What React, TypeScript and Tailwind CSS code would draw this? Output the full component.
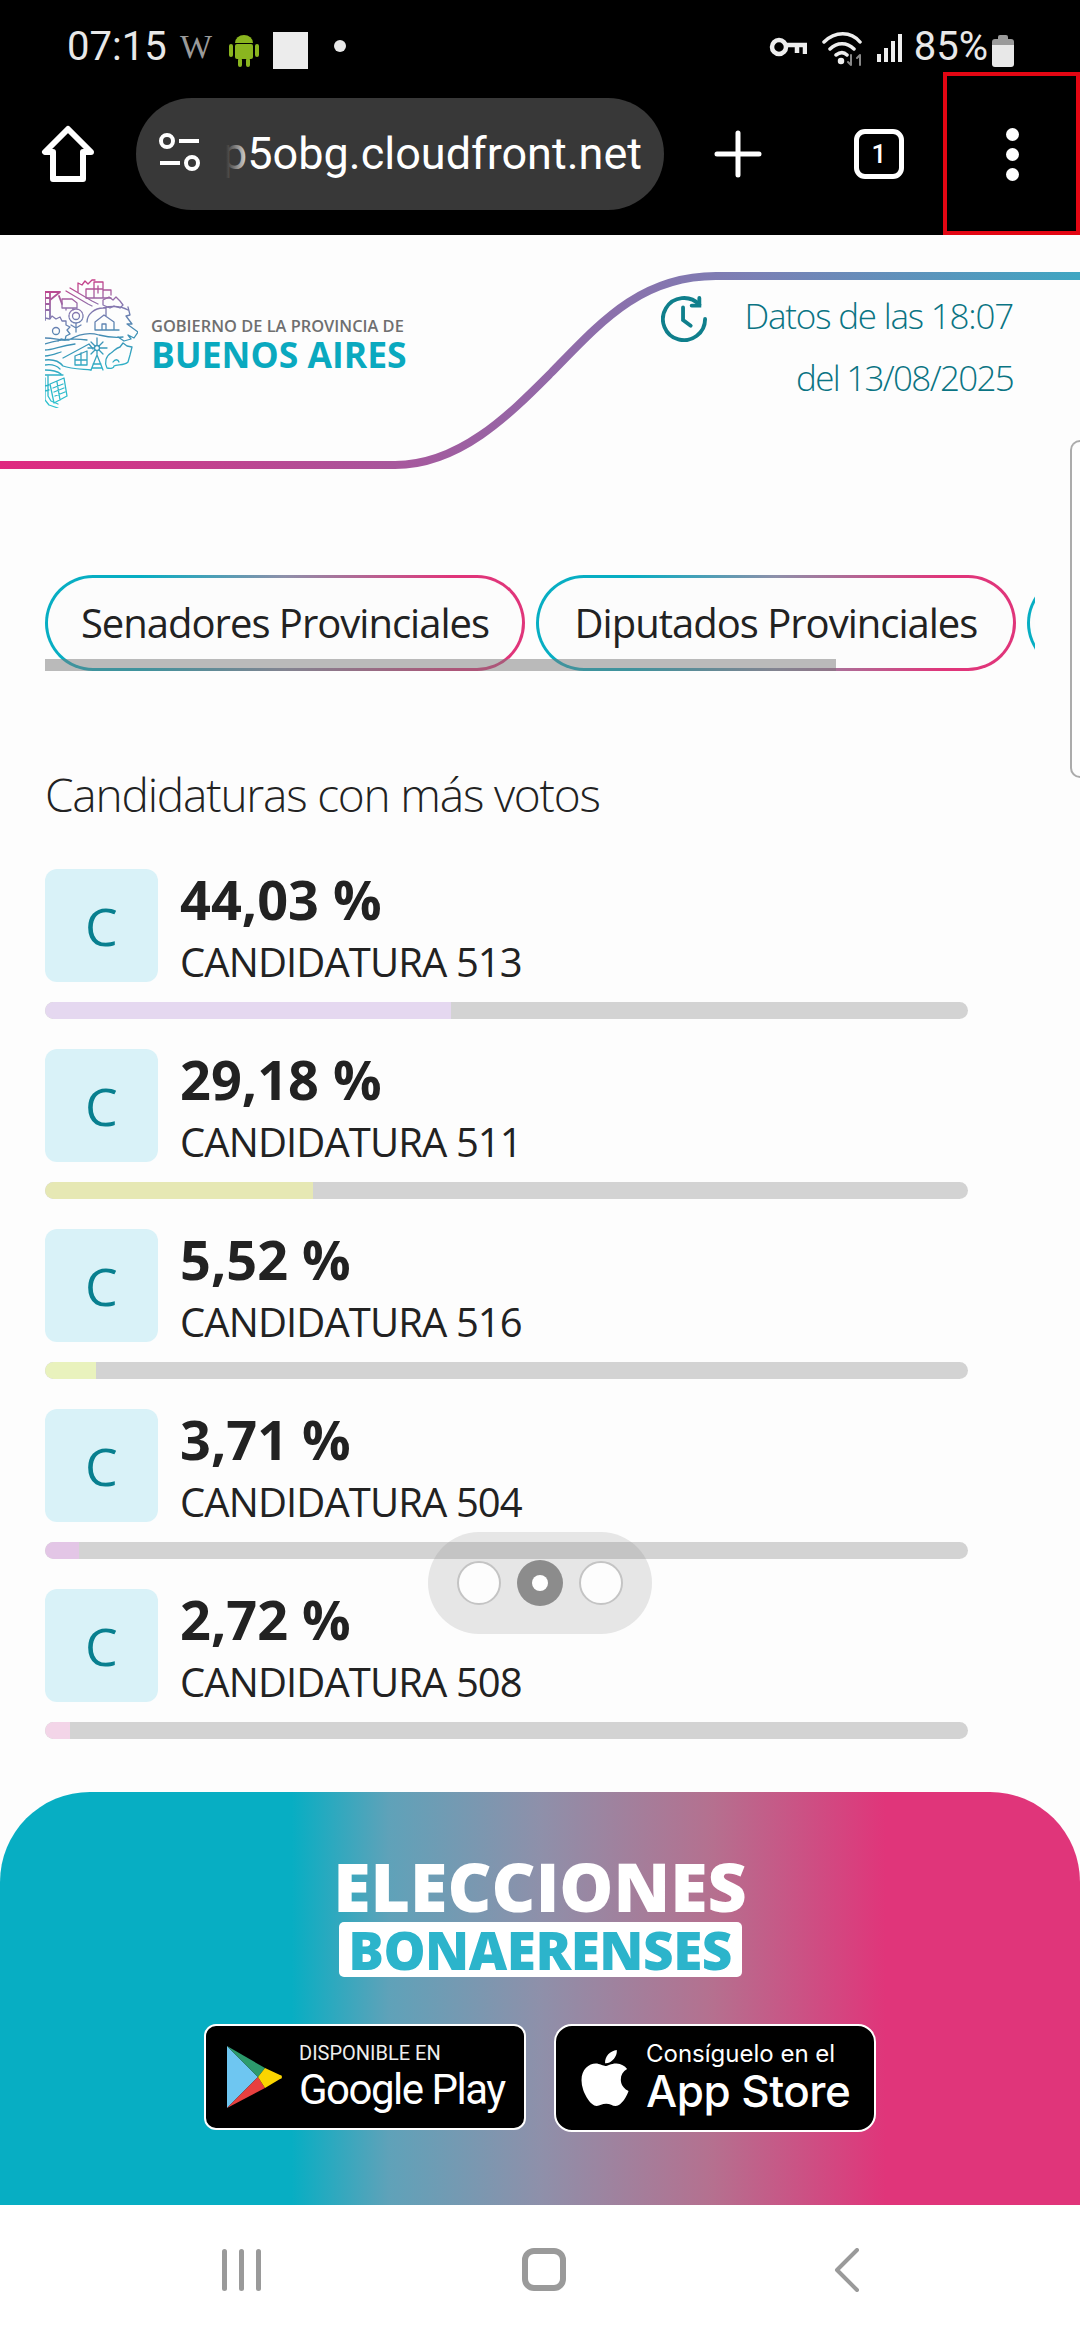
import React from "react";
import { FaApple } from "react-icons/fa";

const candidates = [
  { pct: "44,03 %", name: "CANDIDATURA 513", width: "44%", fill: "#e5d8f0" },
  { pct: "29,18 %", name: "CANDIDATURA 511", width: "29%", fill: "#e6e8b4" },
  { pct: "5,52 %", name: "CANDIDATURA 516", width: "5.5%", fill: "#e9f2bd" },
  { pct: "3,71 %", name: "CANDIDATURA 504", width: "3.7%", fill: "#e3c6e6" },
  { pct: "2,72 %", name: "CANDIDATURA 508", width: "2.7%", fill: "#f3d5e8" },
];

function StatusBar() {
  return (
    <div className="flex h-[72px] items-end pl-[67px] pr-[66px] font-['Roboto',sans-serif] text-[#e8e8e8]">
      <span className="w-[113px] text-[40px] leading-[50px]">07:15</span>
      <span className="w-[48px] font-['Liberation_Serif',serif] text-[34px] leading-[50px] text-[#9a9a9a]">W</span>
      {/* android */}
      <svg width="32" height="36" viewBox="0 0 32 36" className="mb-[5px]">
        <path d="M7 12a9 8 0 0 1 18 0z" fill="#8ab51f" />
        <rect x="7" y="13" width="18" height="15" rx="2" fill="#8ab51f" />
        <rect x="1" y="13" width="4" height="13" rx="2" fill="#8ab51f" />
        <rect x="27" y="13" width="4" height="13" rx="2" fill="#8ab51f" />
        <rect x="10" y="27" width="4" height="9" rx="2" fill="#8ab51f" />
        <rect x="18" y="27" width="4" height="9" rx="2" fill="#8ab51f" />
      </svg>
      <div className="mb-[3px] ml-[13px] h-[37px] w-[35px] bg-[#ececec]" />
      <div className="mb-[20px] ml-[26px] h-[12px] w-[12px] rounded-full bg-[#e8e8e8]" />
      <div className="flex-1" />
      {/* vpn key */}
      <svg width="38" height="22" viewBox="0 0 38 22" className="mb-[14px]" fill="none" stroke="#eee" strokeWidth="4.5">
        <circle cx="10" cy="11" r="7" />
        <path d="M17 9h19v9M28 9v8" />
      </svg>
      {/* wifi */}
      <svg width="44" height="36" viewBox="0 0 44 36" className="mb-[5px] ml-[15px]" fill="none" stroke="#eee" strokeWidth="3.5" strokeLinecap="round">
        <path d="M2 11c11-11 27-11 36 0M8 18c7-7 17-7 24 0M14 24c4-3 8-3 11 0" />
        <circle cx="19" cy="30" r="1.5" fill="#eee" />
        <path d="M29 24v10M26 31l3 3M38 34v-10M35 27l3-3" stroke="#888" strokeWidth="2" />
      </svg>
      {/* signal */}
      <div className="mb-[10px] ml-[11px] flex h-[28px] items-end gap-[3px]">
        <div className="h-[8px] w-[4px] bg-[#eee]" />
        <div className="h-[14px] w-[4px] bg-[#eee]" />
        <div className="h-[21px] w-[4px] bg-[#eee]" />
        <div className="h-[28px] w-[4px] bg-[#eee]" />
      </div>
      <span className="ml-[12px] text-[40px] leading-[50px]">85%</span>
      {/* battery */}
      <div className="mb-[5px] ml-[4px] flex h-[32px] w-[22px] flex-col items-center">
        <div className="h-[4px] w-[10px] rounded-t-[2px] bg-[#9a9a9a]" />
        <div className="h-[6px] w-full rounded-t-[3px] bg-[#9a9a9a]" />
        <div className="w-full flex-1 rounded-b-[3px] bg-[#e8e8e8]" />
      </div>
    </div>
  );
}

function Toolbar() {
  return (
    <div className="relative flex h-[163px] items-start pt-[26px]">
      <div className="flex h-[112px] w-[136px] items-center justify-center">
        <svg width="54" height="58" viewBox="0 0 54 58" fill="none" stroke="#fff" strokeWidth="6" strokeLinejoin="round">
          <path d="M27 4 4 27h8v27h30V27h8z" />
        </svg>
      </div>
      {/* omnibox */}
      <div className="flex h-[112px] w-[528px] items-center overflow-hidden rounded-full bg-[#383838] pl-[22px] pr-[22px]">
        <svg width="44" height="44" viewBox="0 0 44 44" fill="none" stroke="#fff" strokeWidth="4" className="shrink-0">
          <circle cx="9" cy="9" r="6" />
          <path d="M21 9h20M2 31h20" />
          <circle cx="34" cy="31" r="6" />
        </svg>
        <div className="relative ml-[24px] flex flex-1 justify-end overflow-hidden whitespace-nowrap font-['Roboto',sans-serif] text-[45px] leading-[54px] text-white">
          <span className="shrink-0">p5obg.cloudfront.net</span>
          <div className="absolute inset-y-0 left-0 w-[26px] bg-gradient-to-r from-[#383838] to-transparent" />
        </div>
      </div>
      <div className="flex h-[112px] w-[148px] items-center justify-center">
        <svg width="48" height="48" viewBox="0 0 48 48" stroke="#fff" strokeWidth="5" strokeLinecap="round">
          <path d="M24 3v42M3 24h42" />
        </svg>
      </div>
      <div className="ml-[42px] flex h-[112px] w-[50px] items-center justify-center">
        <div className="flex h-[50px] w-[50px] shrink-0 items-center justify-center rounded-[11px] border-[5px] border-white font-['Roboto',sans-serif] text-[26px] font-medium text-white">
          1
        </div>
      </div>
      <div className="flex h-[112px] flex-1 flex-col items-center justify-center gap-[7px] pl-[40px]">
        <div className="h-[13px] w-[13px] rounded-full bg-white" />
        <div className="h-[13px] w-[13px] rounded-full bg-white" />
        <div className="h-[13px] w-[13px] rounded-full bg-white" />
      </div>
      {/* annotation box */}
      <div className="absolute bottom-0 right-0 top-0 w-[137px] border-4 border-[#e30613]" />
    </div>
  );
}

function ProvinceLogo() {
  return (
    <svg width="93" height="130" viewBox="0 0 93 130" fill="none" strokeWidth="1.3" strokeLinecap="round" strokeLinejoin="round" className="shrink-0">
      <defs>
        <linearGradient id="mapGrad" gradientUnits="userSpaceOnUse" x1="15" y1="0" x2="35" y2="130">
          <stop offset="0" stopColor="#d6307f" />
          <stop offset="0.25" stopColor="#8d74ae" />
          <stop offset="0.5" stopColor="#3f8fb4" />
          <stop offset="0.75" stopColor="#2db3c8" />
          <stop offset="1" stopColor="#2ec6d0" />
        </linearGradient>
      </defs>
      <g stroke="url(#mapGrad)">
        {/* factory, hospital */}
        <path d="M33 14V5l4 2 3-4 3 3 4-4h3M41 20V11h9M49 20V4h9v16M58 12h8v5M53 8v7M50 11h7M41 20h25" />
        {/* road, truck */}
        <path d="M25 10l22 13 6 3M21 13l22 13 4 2M17 29V21h10l5 4v5H17zM21 30v2M28 30v2" />
        {/* crane */}
        <path d="M0 14h15M0 14v28M5 14v26M0 20h5M0 26h5M0 32h5M15 14 5 22M14 18l3 8" strokeWidth="1.8" />
        {/* animals */}
        <path d="M58 22l6-3 4 3 3-3 4 4 3 4-3 3-6-2-4 2-7-3z" />
        {/* sunflower */}
        <circle cx="31" cy="38" r="7" strokeDasharray="2 1" />
        <circle cx="31" cy="38" r="3.5" />
        <path d="M31 45v9M31 50l-5-3M31 50l5-3" />
        {/* hill and house */}
        <path d="M42 44c0-8 8-14 16-14 8-2 18-2 25 2M50 52V44l9-7 10 7v8zM57 52v-6h4v6M50 52h24M61 30v8" />
        {/* east coast */}
        <path d="M83 29l2 8-4 1 6 8-5 0 11 8-4 6-6-3 3 4-7 2-6-4" />
        {/* gear */}
        <circle cx="11" cy="53" r="3.5" />
        <path d="M0 40l5 1 2-3 4 3 4-2 2 4 4 0 0 4 4 2-3 3 3 4-4 2-1 4-4-1-3 2" />
        {/* fields */}
        <path d="M0 60c10 0 16 3 24 2 10-6 20-8 30-5 8 2 16 3 24 2M0 66c12-4 28-6 42-4M0 72c8 0 14-4 30-6M0 78c6 0 10-2 16-4" />
        {/* barn */}
        <path d="M18 80l26-14 4 5M30 78l12-5v14H30zM36 75v12M30 82h12" />
        {/* windmill */}
        <circle cx="52" cy="70" r="2.5" />
        <path d="M52 60v7M52 73v5M43 70h6M55 70h7M46 64l4 4M58 64l-4 4M46 76l4-4M58 76l-4-4M46 92l6-15 6 15M48 86h8M47 90h10" />
        {/* cow */}
        <path d="M62 90c-3-6-1-12 4-15 4-3 5-5 9-6l3-4 4 3 5 1-2 8-2 7c-4 4-11 2-14 4 0 2-3 3-7 2M68 84c2-3 5-3 6 0" />
        {/* waves, shore */}
        <path d="M0 82c8-1 14 1 18 6 8 3 18 3 28 4M0 87c6-1 12 1 15 4M0 92c6 0 12 1 16 4M0 97h18" />
        {/* book */}
        <path d="M5 106l14-6 3 18-13 7zM8 110l10-4M9 114l10-4M10 118l10-4M12 104l3 18" />
        <path d="M0 100v22M3 98v20M0 122l4 5 9 3M3 118l3 5 7 3M0 108l4-1M0 113l4-1" />
      </g>
    </svg>
  );
}

function CurveLine() {
  return (
    <svg width="1080" height="240" viewBox="0 0 1080 240" className="absolute left-0 top-0" fill="none">
      <defs>
        <linearGradient id="curveGrad" gradientUnits="userSpaceOnUse" x1="0" y1="0" x2="1080" y2="0">
          <stop offset="0" stopColor="#e0287f" />
          <stop offset="0.45" stopColor="#9a62a3" />
          <stop offset="0.7" stopColor="#7a80b5" />
          <stop offset="1" stopColor="#3fa6c2" />
        </linearGradient>
      </defs>
      <path d="M0 230H395C460 230 510 179 551 138C600 88 640 41 716 41H1080" stroke="url(#curveGrad)" strokeWidth="8" />
    </svg>
  );
}

function Tab({ label }: { label: string }) {
  return (
    <div className="flex h-[96px] w-[480px] shrink-0 items-center justify-center rounded-[48px] border-[3px] border-transparent text-[40px] tracking-[-1px] text-[#222] [background:linear-gradient(#fcfcfc,#fcfcfc)_padding-box,linear-gradient(90deg,#07aec3_20%,#8e90aa_50%,#e0357a_85%)_border-box]">
      {label}
    </div>
  );
}

function CandidateRow({ pct, name, width, fill }: (typeof candidates)[number]) {
  return (
    <div className="flex h-[180px] flex-col">
      <div className="flex h-[113px] items-start gap-[22px]">
        <div className="flex h-[113px] w-[113px] items-center justify-center rounded-[12px] bg-[#d9f2f8] text-[52px] text-[#087f8f]">
          C
        </div>
        <div className="flex flex-col">
          <span className="text-[54px] font-bold leading-[60px] text-[#222]">{pct}</span>
          <span className="mt-[8px] text-[40px] leading-[50px] tracking-[-0.9px] text-[#222]">{name}</span>
        </div>
      </div>
      <div className="mt-[20px] h-[17px] w-[923px] overflow-hidden rounded-full bg-[#d3d3d3]">
        <div className="h-full rounded-l-full" style={{ width, backgroundColor: fill }} />
      </div>
    </div>
  );
}

function StoreBadges() {
  return (
    <div className="mt-[47px] flex items-start gap-[28px]">
      <div className="flex h-[106px] w-[322px] items-center rounded-[12px] border-2 border-white bg-black pl-[21px] text-white">
        <svg width="55" height="62" viewBox="0 0 55 62" className="shrink-0">
          <path d="M0 0 31 31 0 62z" fill="#6ec6f1" />
          <path d="M0 0 38 22 31 31z" fill="#2c9b6c" />
          <path d="M0 62 38 42 31 31z" fill="#e8403f" />
          <path d="M38 22 53 29a2 2 0 0 1 0 4L38 42 31 31z" fill="#fbd500" />
        </svg>
        <div className="ml-[17px] flex flex-col font-['Roboto',sans-serif]">
          <span className="text-[20px] leading-[24px] text-[#eee]">DISPONIBLE EN</span>
          <span className="mt-[2px] text-[42px] leading-[46px] tracking-[-1.5px]">Google Play</span>
        </div>
      </div>
      <div className="flex h-[108px] w-[322px] items-center rounded-[18px] border-2 border-white bg-black pl-[22px] text-white">
        <FaApple className="h-[64px] w-[54px]" />
        <div className="ml-[14px] flex flex-col font-['Inter',sans-serif]">
          <span className="text-[24px] leading-[26px]">Consíguelo en el</span>
          <span className="text-[44px] font-medium leading-[48px] tracking-[-0.5px]">App Store</span>
        </div>
      </div>
    </div>
  );
}

export default function App() {
  return (
    <div className="flex h-[2340px] w-[1080px] flex-col overflow-hidden bg-[#fdfdfd] font-['Open_Sans',sans-serif]">
      <div className="h-[235px] bg-black">
        <StatusBar />
        <Toolbar />
      </div>

      <main className="relative flex-1 overflow-hidden">
        <CurveLine />

        {/* edge panel handle */}
        <div className="absolute right-0 top-[205px] h-[338px] w-[10px] rounded-l-[10px] border-y-2 border-l-2 border-[#aaa]" />

        {/* pager dots */}
        <div className="absolute left-[428px] top-[1297px] flex h-[102px] w-[224px] items-center justify-center gap-[16px] rounded-[51px] bg-[#8c8c8c]/20">
          <div className="h-[44px] w-[44px] rounded-full border-2 border-[#c4c4c4] bg-[#fdfdfd]" />
          <div className="flex h-[46px] w-[46px] items-center justify-center rounded-full bg-[#8c8c8c]">
            <div className="h-[16px] w-[16px] rounded-full bg-white" />
          </div>
          <div className="h-[44px] w-[44px] rounded-full border-2 border-[#c4c4c4] bg-[#fdfdfd]" />
        </div>

        <div className="flex h-[340px] items-start justify-between pl-[45px] pr-[67px] pt-[43px]">
          <div className="flex items-center gap-[13px]">
            <ProvinceLogo />
            <div className="mt-[2px] flex flex-col">
              <span className="text-[16.4px] font-semibold leading-[20px] text-[#6f6f70]">GOBIERNO DE LA PROVINCIA DE</span>
              <span className="text-[35.5px] font-bold leading-[36px] text-[#0aa9bf]">BUENOS AIRES</span>
            </div>
          </div>
          <div className="flex items-start gap-[37px] pt-[7px]">
            <svg width="46" height="46" viewBox="0 0 48 48" fill="none" stroke="#0f7f8c" strokeWidth="4" strokeLinecap="round" className="mt-[11px]">
              <path d="M40 9a22 22 0 1 0 6 15" />
              <path d="M40 2v8h-8M23 12v13l8 6" />
            </svg>
            <div className="text-right text-[35px] font-light leading-[62px] tracking-[-1.2px] text-[#0a7483]">
              <div>Datos de las 18:07</div>
              <div className="tracking-[-1.7px]">del 13/08/2025</div>
            </div>
          </div>
        </div>

        {/* tabs */}
        <div className="relative ml-[45px] flex h-[96px] w-[990px] gap-[11px] overflow-hidden">
          <Tab label="Senadores Provinciales" />
          <Tab label="Diputados Provinciales" />
          <Tab label="Concejales" />
          <div className="absolute bottom-0 left-0 h-[12px] w-[791px] bg-[#777]/50" />
        </div>

        <h2 className="ml-[45px] mt-[93px] text-[46px] font-light leading-[60px] tracking-[-1.2px] text-[#222]">Candidaturas con más votos</h2>

        <div className="ml-[45px] mt-[45px] flex flex-col">
          {candidates.map((c) => (
            <CandidateRow key={c.name} {...c} />
          ))}
        </div>
      </main>

      <footer className="flex h-[413px] flex-col items-center rounded-t-[90px] bg-[linear-gradient(90deg,#07aec3_27%,#5fa2b9_36%,#8e90aa_50%,#b5708f_66%,#e0357a_82%)] pt-[58px]">
        <div className="text-[68px] font-extrabold leading-[72px] text-white">ELECCIONES</div>
        <div className="flex h-[55px] w-[403px] items-center justify-center rounded-[5px] bg-white text-[53px] font-extrabold tracking-[-0.5px] text-[#2cb4cb]">
          BONAERENSES
        </div>
        <StoreBadges />
      </footer>

      <nav className="flex h-[135px] items-center bg-white pb-[6px]">
        <div className="ml-[222px] flex gap-[12px]">
          <div className="h-[42px] w-[5px] rounded-full bg-[#9a9a9a]" />
          <div className="h-[42px] w-[5px] rounded-full bg-[#9a9a9a]" />
          <div className="h-[42px] w-[5px] rounded-full bg-[#9a9a9a]" />
        </div>
        <div className="ml-[261px] h-[43px] w-[44px] rounded-[12px] border-[6px] border-[#9a9a9a]" />
        <svg width="26" height="44" viewBox="0 0 26 44" fill="none" stroke="#9a9a9a" strokeWidth="4" strokeLinecap="round" strokeLinejoin="round" className="ml-[268px]">
          <path d="M23 2 3 22l20 20" />
        </svg>
      </nav>
    </div>
  );
}
